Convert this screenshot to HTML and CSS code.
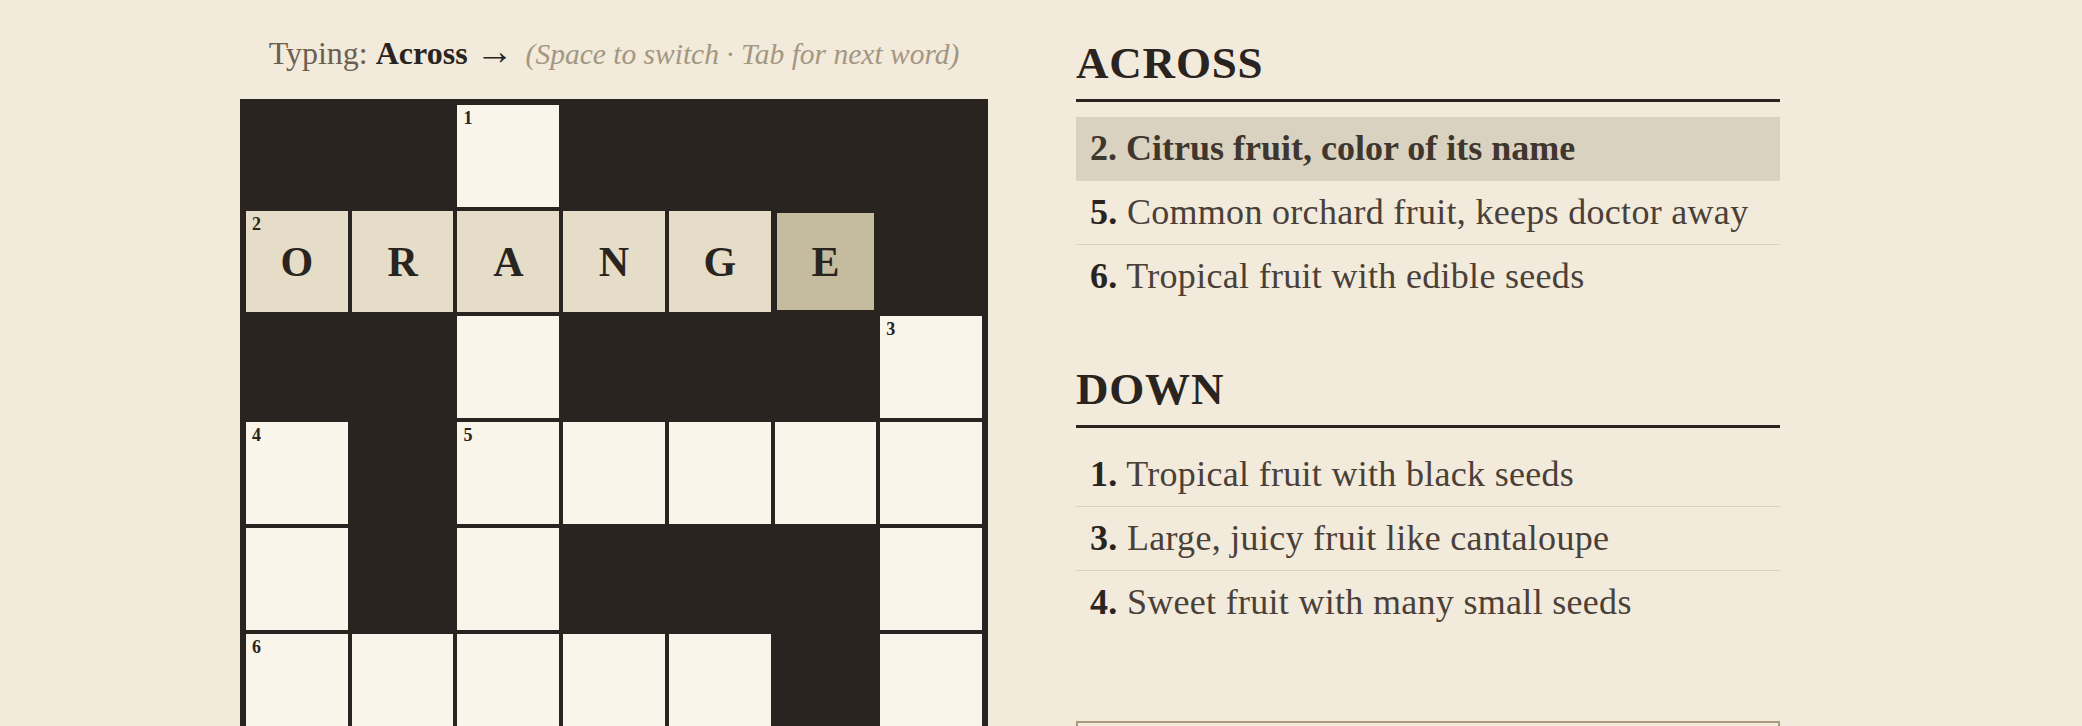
FILE: index.html
```html
<!DOCTYPE html>
<html lang="en">
<head>
<meta charset="utf-8">
<title>Fruit Crossword</title>
<link rel="stylesheet" href="styles.css">
</head>
<body>
<main class="app">
  <section class="board">
    <div class="status">Typing: <b>Across</b> <span class="arrow">→</span><span class="hint">(Space to switch · Tab for next word)</span></div>
    <div class="grid">
      <div class="cell block"></div><div class="cell block"></div><div class="cell"><span class="num">1</span></div><div class="cell block"></div><div class="cell block"></div><div class="cell block"></div><div class="cell block"></div>
      <div class="cell word"><span class="num">2</span>O</div><div class="cell word">R</div><div class="cell word">A</div><div class="cell word">N</div><div class="cell word">G</div><div class="cell active">E</div><div class="cell block"></div>
      <div class="cell block"></div><div class="cell block"></div><div class="cell"></div><div class="cell block"></div><div class="cell block"></div><div class="cell block"></div><div class="cell"><span class="num">3</span></div>
      <div class="cell"><span class="num">4</span></div><div class="cell block"></div><div class="cell"><span class="num">5</span></div><div class="cell"></div><div class="cell"></div><div class="cell"></div><div class="cell"></div>
      <div class="cell"></div><div class="cell block"></div><div class="cell"></div><div class="cell block"></div><div class="cell block"></div><div class="cell block"></div><div class="cell"></div>
      <div class="cell"><span class="num">6</span></div><div class="cell"></div><div class="cell"></div><div class="cell"></div><div class="cell"></div><div class="cell block"></div><div class="cell"></div>
      <div class="cell block"></div><div class="cell block"></div><div class="cell block"></div><div class="cell block"></div><div class="cell block"></div><div class="cell block"></div><div class="cell"></div>
    </div>
  </section>
  <aside class="clues">
    <section class="clue-section">
      <h2>ACROSS</h2>
      <ul>
        <li class="active"><span class="n">2.</span> Citrus fruit, color of its name</li>
        <li><span class="n">5.</span> Common orchard fruit, keeps doctor away</li>
        <li><span class="n">6.</span> Tropical fruit with edible seeds</li>
      </ul>
    </section>
    <section class="clue-section">
      <h2>DOWN</h2>
      <ul>
        <li><span class="n">1.</span> Tropical fruit with black seeds</li>
        <li><span class="n">3.</span> Large, juicy fruit like cantaloupe</li>
        <li><span class="n">4.</span> Sweet fruit with many small seeds</li>
      </ul>
    </section>
    <div class="check"></div>
  </aside>
</main>
</body>
</html>
```

FILE: styles.css
```css
html, body {
  margin: 0;
  padding: 0;
  background: #f2eadb;
}
body {
  font-family: "Liberation Serif", "Times New Roman", serif;
  color: #2a2420;
}
.app {
  display: flex;
  align-items: flex-start;
  gap: 88px;
  padding: 34px 0 0 240px;
}
.board {
  width: 748px;
  flex: none;
}
.status {
  height: 38px;
  line-height: 38px;
  margin-bottom: 27px;
  text-align: center;
  font-size: 32px;
  color: #6b5f52;
  white-space: nowrap;
}
.status b {
  color: #2a2420;
  font-weight: 700;
}
.arrow {
  font-family: "Liberation Sans", sans-serif;
  font-weight: 400;
  font-size: 38px;
  line-height: 0;
  color: #2a2420;
}
.hint {
  font-style: italic;
  font-size: 29.5px;
  color: #a39782;
  margin-left: 12px;
}
.grid {
  display: grid;
  grid-template-columns: repeat(7, 1fr);
  gap: 4px;
  padding: 6px;
  background: #2a2420;
}
.cell {
  position: relative;
  aspect-ratio: 1 / 1;
  background: #f9f5ea;
  display: flex;
  align-items: center;
  justify-content: center;
  font-size: 42px;
  font-weight: 700;
  color: #2a2420;
}
.cell.block {
  background: transparent;
}
.cell.word {
  background: #e5ddc7;
}
.cell.active {
  background: #c5bb9f;
  box-shadow: inset 0 0 0 2px #2a2420;
}
.num {
  position: absolute;
  top: 4px;
  left: 6px;
  font-size: 18px;
  line-height: 18px;
  font-weight: 700;
  color: #2a2420;
}
.clues {
  width: 704px;
  flex: none;
  margin-top: 7px;
}
.clue-section + .clue-section {
  margin-top: 59px;
}
.clue-section h2 {
  margin: 0;
  font-size: 45px;
  line-height: 45px;
  font-weight: 700;
  letter-spacing: 0.8px;
  padding-bottom: 13px;
  border-bottom: 3px solid #2a2420;
  color: #2a2420;
}
.clue-section ul {
  list-style: none;
  margin: 15px 0 0;
  padding: 0;
}
.clue-section li {
  padding: 12px 14px;
  line-height: 39px;
  font-size: 36px;
  letter-spacing: 0.3px;
  color: #4a4038;
  border-bottom: 1px solid #d9d1c1;
  white-space: nowrap;
}
.clue-section li:last-child {
  border-bottom: none;
}
.clue-section li.active {
  background: #dad2c0;
  font-weight: 700;
  letter-spacing: 0;
  color: #3f362e;
}
.n {
  font-weight: 700;
  color: #2a2420;
}
.clue-section li.active .n {
  color: #3f362e;
}
.check {
  margin-top: 87px;
  height: 60px;
  border: 2px solid #a89a7e;
}
```
